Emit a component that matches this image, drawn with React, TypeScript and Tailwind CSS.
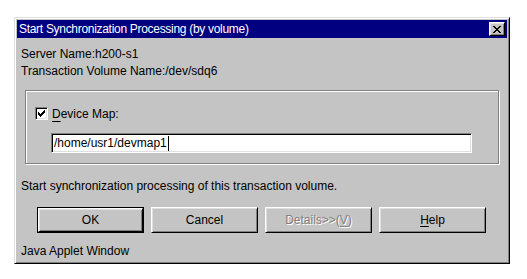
import React from "react";

const raised =
  "border border-t-white border-l-white border-r-black border-b-black shadow-[inset_1px_1px_0_#dfdfdf,inset_-1px_-1px_0_#808080]";

function Btn({ children, def, disabled }: { children: React.ReactNode; def?: boolean; disabled?: boolean }) {
  if (def) {
    return (
      <div className="w-[107px] h-[26px] border border-black">
        <div className={`w-full h-full ${raised} flex items-center justify-center`}>{children}</div>
      </div>
    );
  }
  return (
    <div
      className={`w-[107px] h-[26px] ${raised} flex items-center justify-center ${
        disabled ? "text-[#808080] [text-shadow:1px_1px_0_#fff]" : ""
      }`}
    >
      {children}
    </div>
  );
}

export default function App() {
  return (
    <div className="w-[527px] h-[279px] bg-white pl-[14px] pt-[17px] font-['Liberation_Sans',Arial,sans-serif] text-[12px] leading-none text-black">
      <div className="w-[496px] h-[247px] bg-[#c4c4c4] border border-t-[#dfdfdf] border-l-[#dfdfdf] border-r-black border-b-black shadow-[inset_1px_1px_0_#fff,inset_-1px_-1px_0_#808080] p-[2px] flex flex-col">
        {/* Title bar */}
        <div className="h-[18px] bg-[#000080] flex items-center justify-between pl-[2px] pr-[2px]">
          <span className="text-white tracking-[-0.3px]">Start Synchronization Processing (by volume)</span>
          <div className={`w-[16px] h-[14px] bg-[#c4c4c4] ${raised} flex items-center justify-center`}>
            <svg width="8" height="7" viewBox="0 0 8 7" shapeRendering="crispEdges">
              <path
                d="M0 0h2v1h-2zM6 0h2v1h-2zM1 1h2v1h-2zM5 1h2v1h-2zM2 2h4v1h-4zM3 3h2v1h-2zM2 4h4v1h-4zM1 5h2v1h-2zM5 5h2v1h-2zM0 6h2v1h-2zM6 6h2v1h-2z"
                fill="#000"
              />
            </svg>
          </div>
        </div>

        <div className="flex flex-col pl-[4px]">
          <div className="mt-[7px] h-[17px] flex items-center">Server Name:h200-s1</div>
          <div className="h-[17px] flex items-center">Transaction Volume Name:/dev/sdq6</div>

          {/* Group box */}
          <div className="mt-[11px] ml-[4px] w-[474px] h-[74px] border border-[#808080] shadow-[1px_1px_0_#fff,inset_1px_1px_0_#fff] flex flex-col">
            <div className="mt-[16px] pl-[9px] flex items-center">
              <div className="w-[13px] h-[13px] bg-white border border-t-[#808080] border-l-[#808080] border-r-white border-b-white shadow-[inset_1px_1px_0_#000,inset_-1px_-1px_0_#dfdfdf] flex items-center justify-center">
                <svg width="7" height="7" viewBox="0 0 7 7" shapeRendering="crispEdges">
                  <path d="M6 0h1v3h-1zM5 1h1v3h-1zM4 2h1v3h-1zM3 3h1v3h-1zM2 4h1v3h-1zM1 3h1v3h-1zM0 2h1v3h-1z" fill="#000" />
                </svg>
              </div>
              <span className="ml-[4px]">
                <span className="underline underline-offset-[3px]">D</span>evice Map:
              </span>
            </div>
            <div className="mt-[13px] ml-[25px] w-[421px] h-[20px] bg-white border border-t-[#808080] border-l-[#808080] border-r-white border-b-white shadow-[inset_1px_1px_0_#000,inset_-1px_-1px_0_#dfdfdf] flex items-center pl-[2px]">
              <span>/home/usr1/devmap1</span>
              <span className="w-[1px] h-[15px] bg-black ml-[1px]" />
            </div>
          </div>

          <div className="mt-[13px] h-[17px] flex items-center">Start synchronization processing of this transaction volume.</div>

          <div className="mt-[13px] ml-[16px] flex gap-[7px]">
            <Btn def>OK</Btn>
            <Btn>Cancel</Btn>
            <Btn disabled>
              Details&gt;&gt;(<span className="underline underline-offset-2">V</span>)
            </Btn>
            <Btn>
              <span className="underline underline-offset-2">H</span>elp
            </Btn>
          </div>

          <div className="mt-[10px] h-[16px] flex items-center">Java Applet Window</div>
        </div>
      </div>
    </div>
  );
}
